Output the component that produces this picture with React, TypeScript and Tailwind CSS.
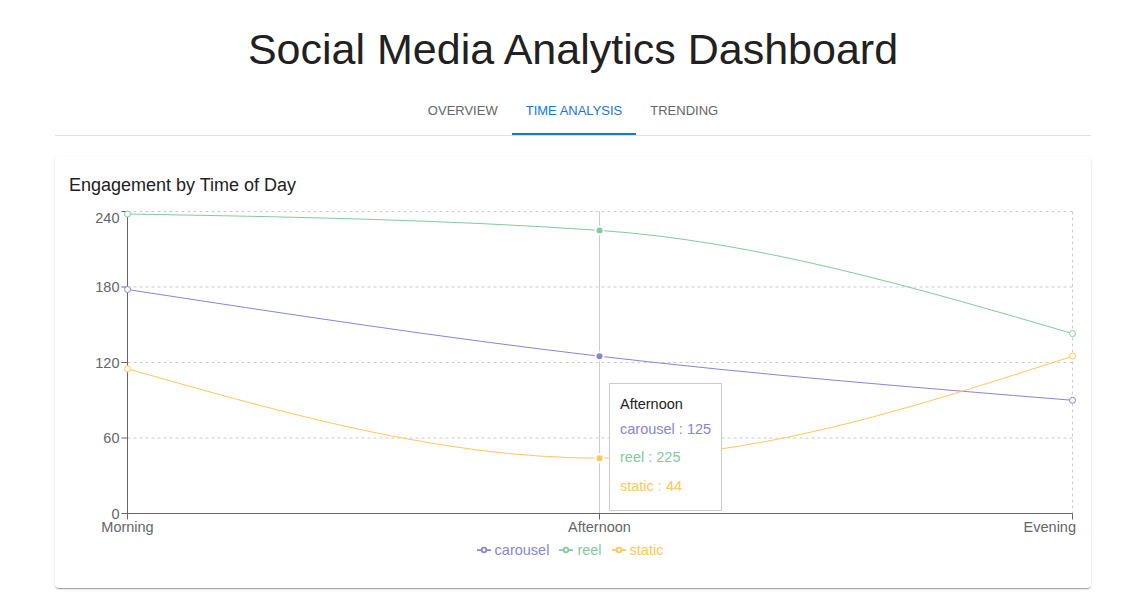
import React from "react";

const X = [56.5, 528.5, 1001.5];
const yOf = (v: number) => 313.5 - v * (302 / 240);

type Series = { name: string; color: string; values: number[] };
const series: Series[] = [
  { name: "carousel", color: "#8884d8", values: [178, 125, 90] },
  { name: "reel", color: "#82ca9d", values: [238, 225, 143] },
  { name: "static", color: "#ffc658", values: [115, 44, 125] },
];

function monotonePath(xs: number[], ys: number[]): string {
  const n = xs.length;
  const sign = (v: number) => (v < 0 ? -1 : 1);
  const t: number[] = new Array(n).fill(0);
  for (let i = 1; i < n - 1; i++) {
    const h0 = xs[i] - xs[i - 1];
    const h1 = xs[i + 1] - xs[i];
    const s0 = (ys[i] - ys[i - 1]) / h0;
    const s1 = (ys[i + 1] - ys[i]) / h1;
    const p = (s0 * h1 + s1 * h0) / (h0 + h1);
    t[i] = (sign(s0) + sign(s1)) * Math.min(Math.abs(s0), Math.abs(s1), 0.5 * Math.abs(p)) || 0;
  }
  const slope2 = (i0: number, i1: number, tt: number) => {
    const h = xs[i1] - xs[i0];
    return h ? (3 * (ys[i1] - ys[i0]) / h - tt) / 2 : tt;
  };
  t[0] = slope2(0, 1, t[1]);
  t[n - 1] = slope2(n - 2, n - 1, t[n - 2]);
  let d = `M${xs[0]},${ys[0]}`;
  for (let i = 0; i < n - 1; i++) {
    const dx = (xs[i + 1] - xs[i]) / 3;
    d += `C${xs[i] + dx},${ys[i] + dx * t[i]},${xs[i + 1] - dx},${ys[i + 1] - dx * t[i + 1]},${xs[i + 1]},${ys[i + 1]}`;
  }
  return d;
}

const yTicks = [0, 60, 120, 180, 240];
const labels = ["Morning", "Afternoon", "Evening"];

function LegendIcon({ color }: { color: string }) {
  return (
    <svg width="14" height="14" viewBox="0 0 32 32" className="mr-[4px]">
      <path
        strokeWidth="4"
        fill="none"
        stroke={color}
        d="M0,16h10.666666666666666A5.333333333333333,5.333333333333333,0,1,1,21.333333333333332,16H32M21.333333333333332,16A5.333333333333333,5.333333333333333,0,1,1,10.666666666666666,16"
      />
    </svg>
  );
}

function Chart() {
  return (
    <div className="relative mt-[2px]">
      <svg width="1004" height="339" className="block overflow-visible">
        <g stroke="#ccc" strokeDasharray="3 3" fill="none">
          {yTicks.slice(1).map((v) => (
            <line key={v} x1={X[0]} x2={X[2]} y1={yOf(v)} y2={yOf(v)} />
          ))}
          {X.map((x) => (
            <line key={x} x1={x} x2={x} y1={yOf(240)} y2={yOf(0)} />
          ))}
        </g>
        <line x1={X[1]} x2={X[1]} y1={yOf(240)} y2={yOf(0)} stroke="#ccc" strokeWidth="1" />
        <g stroke="#666" fill="none">
          <line x1={X[0]} x2={X[0]} y1={yOf(240) - 0.5} y2={yOf(0)} />
          {yTicks.map((v) => (
            <line key={v} x1={X[0] - 6} x2={X[0]} y1={yOf(v)} y2={yOf(v)} />
          ))}
          <line x1={X[0]} x2={X[2]} y1={yOf(0)} y2={yOf(0)} />
          {X.map((x) => (
            <line key={x} x1={x} x2={x} y1={yOf(0)} y2={yOf(0) + 6} />
          ))}
        </g>
        <g fill="#666" fontSize="14.5" fontFamily="'Liberation Sans', Arial, sans-serif">
          {yTicks.map((v) => (
            <text key={v} x={X[0] - 8} y={yOf(v) + (v === 240 ? 6 : 0)} dy="0.355em" textAnchor="end">
              {v}
            </text>
          ))}
          <text x={X[0]} y={yOf(0) + 8} dy="0.71em" textAnchor="middle">
            {labels[0]}
          </text>
          <text x={X[1]} y={yOf(0) + 8} dy="0.71em" textAnchor="middle">
            {labels[1]}
          </text>
          <text x={1005} y={yOf(0) + 8} dy="0.71em" textAnchor="end">
            {labels[2]}
          </text>
        </g>
        {series.map((s) => (
          <path
            key={s.name}
            d={monotonePath(X, s.values.map(yOf))}
            fill="none"
            stroke={s.color}
            strokeWidth="1"
          />
        ))}
        {series.map((s) =>
          s.values.map((v, i) => (
            <circle key={s.name + i} cx={X[i]} cy={yOf(v)} r="3" fill="#fff" stroke={s.color} strokeWidth="1" />
          ))
        )}
        {series.map((s) => (
          <circle key={s.name + "a"} cx={X[1]} cy={yOf(s.values[1])} r="4" fill={s.color} stroke="#fff" strokeWidth="2" />
        ))}
      </svg>

      <div className="absolute left-[538px] top-[183px] whitespace-nowrap border border-[#ccc] bg-white p-[10px] text-[14.5px] leading-[20.5px]">
        <p className="m-0 text-[#222]">Afternoon</p>
        <ul className="m-0 p-0">
          {series.map((s) => (
            <li key={s.name} className="block py-[4px]" style={{ color: s.color }}>
              {s.name} : {s.values[1]}
            </li>
          ))}
        </ul>
      </div>

      <ul className="m-0 flex h-[22px] items-center justify-center py-0 pl-[4px] pr-0 text-[14.5px] leading-[22px]">
        {series.map((s) => (
          <li key={s.name} className="mr-[10px] flex items-center" style={{ color: s.color }}>
            <LegendIcon color={s.color} />
            <span>{s.name}</span>
          </li>
        ))}
      </ul>
    </div>
  );
}

export default function App() {
  return (
    <div className="min-h-[603px] bg-white px-[55px] pt-[24px] font-['Liberation_Sans',Arial,sans-serif] text-[#212121]">
      <h1 className="m-0 text-center text-[43px] font-normal leading-[50px]">
        Social Media Analytics Dashboard
      </h1>
      <div className="mt-[13px] flex justify-center border-b border-[#e0e0e0]">
        {["OVERVIEW", "TIME ANALYSIS", "TRENDING"].map((t) => (
          <div
            key={t}
            className={
              "relative flex h-[48px] min-w-[90px] items-center justify-center px-[14px] text-[13px] uppercase " +
              (t === "TIME ANALYSIS" ? "text-[#1976d2]" : "text-[#666]")
            }
          >
            {t}
            {t === "TIME ANALYSIS" && (
              <span className="absolute bottom-0 left-0 right-0 h-[2px] bg-[#1976d2]" />
            )}
          </div>
        ))}
      </div>
      <div className="mt-[21px] rounded-[4px] bg-white px-[16px] pb-[27px] pt-[16px] shadow-[0px_2px_1px_-1px_rgba(0,0,0,0.2),0px_1px_1px_0px_rgba(0,0,0,0.14),0px_1px_3px_0px_rgba(0,0,0,0.12)]">
        <div className="ml-[-2px] h-[25px] text-[18px] leading-[25px]">Engagement by Time of Day</div>
        <Chart />
      </div>
    </div>
  );
}
